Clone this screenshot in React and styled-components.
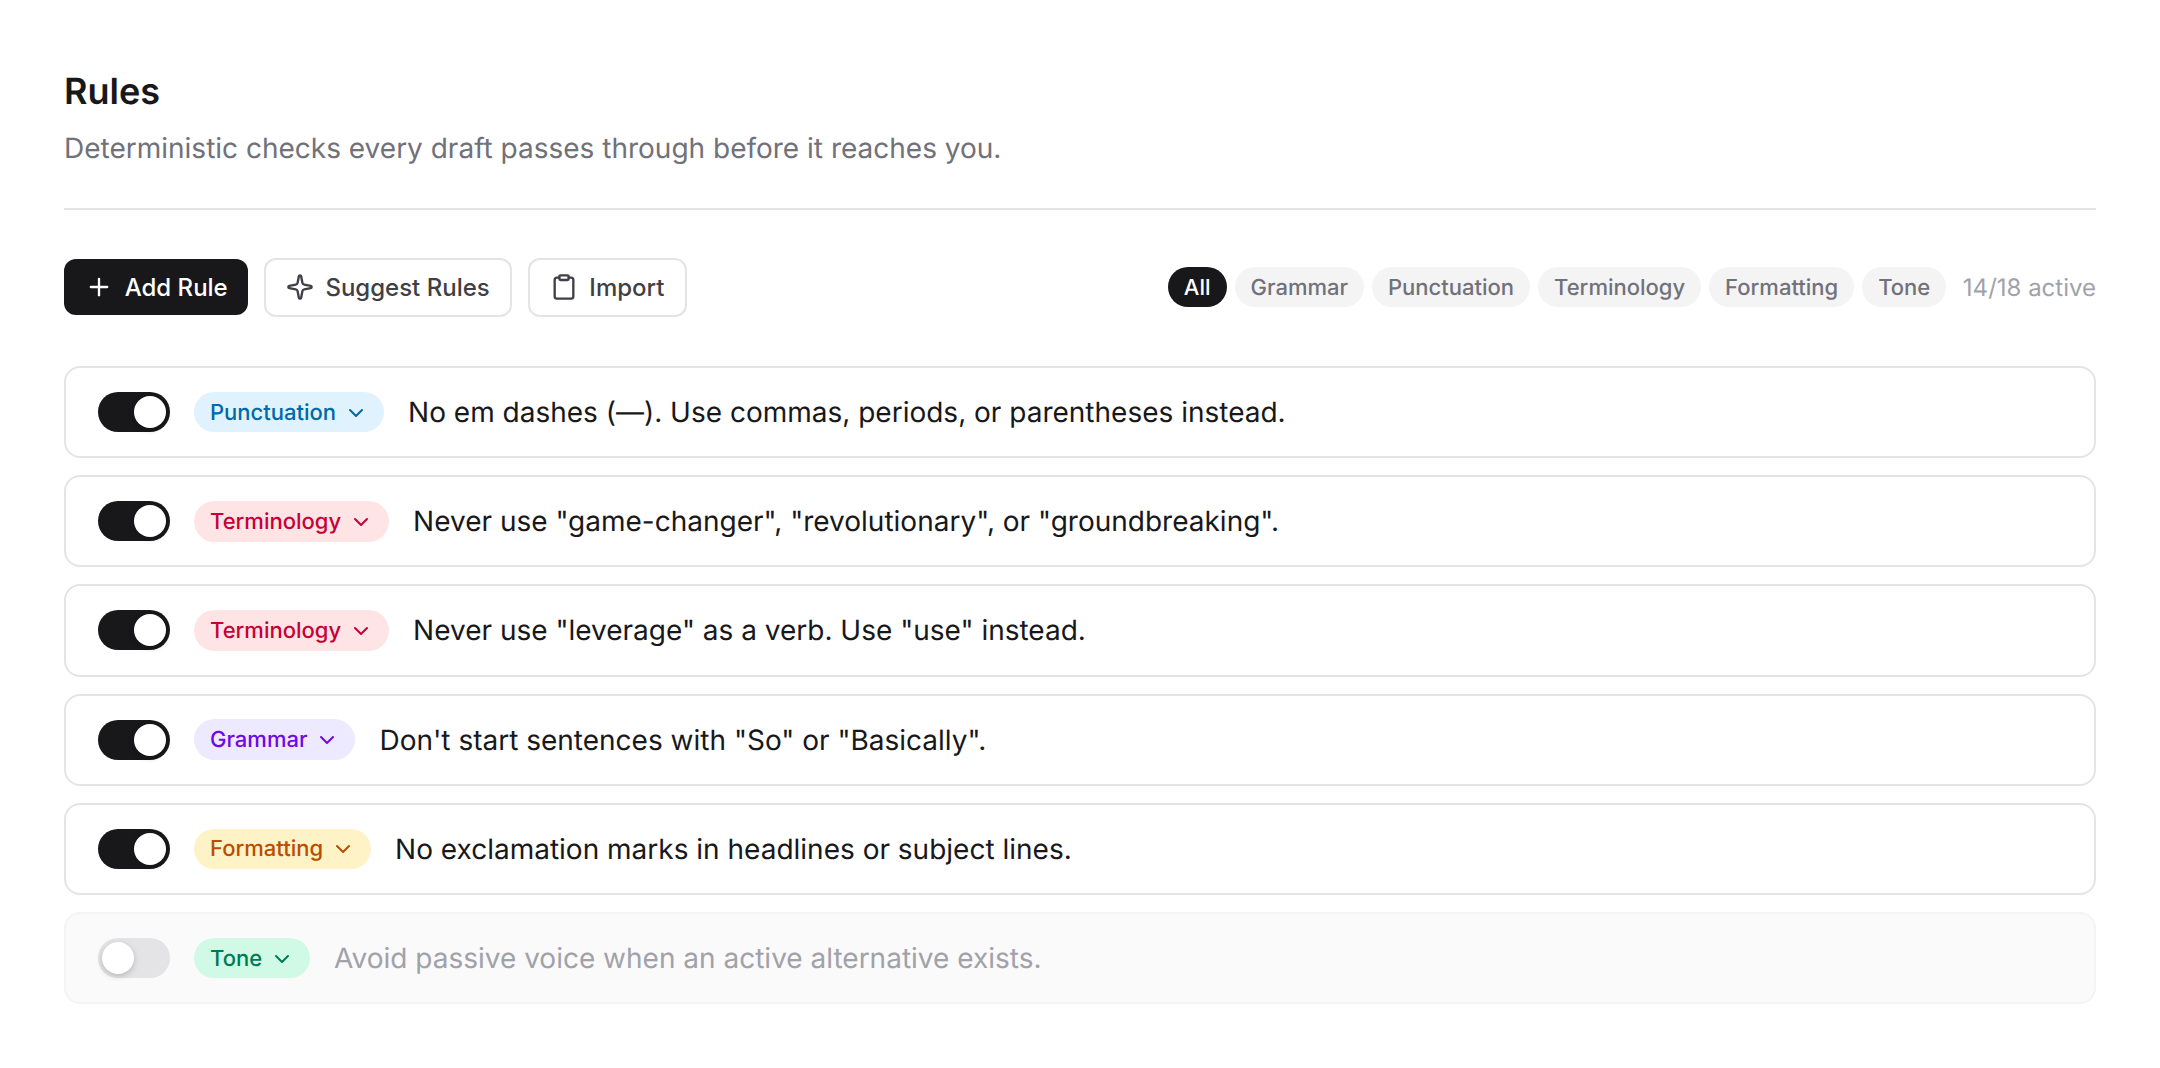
import React from 'react';
import styled, { createGlobalStyle } from 'styled-components';
import { ChevronDown, Clipboard, Plus, Sparkle } from 'lucide-react';

const GlobalStyle = createGlobalStyle`
  html, body {
    margin: 0;
    background: #fff;
  }

  body {
    font-family: Inter, "Liberation Sans", sans-serif;
    color: #18181b;
    text-rendering: geometricPrecision;
  }

  * {
    box-sizing: border-box;
  }
`;

const Page = styled.div`
  padding: 67px 64px 64px;
`;

const Header = styled.header`
  padding-bottom: 39.4px;
  border-bottom: 2px solid #e4e4e7;
`;

const Title = styled.h1`
  margin: 0;
  font-size: 36px;
  line-height: 48px;
  font-weight: 600;
  color: #18181b;
`;

const Subtitle = styled.p`
  margin: 12px 0 0;
  font-size: 28px;
  line-height: 42px;
  color: #71717a;
`;

const Toolbar = styled.div`
  display: flex;
  align-items: center;
  justify-content: space-between;
  margin-top: 47.6px;
`;

const Actions = styled.div`
  display: flex;
  align-items: center;
  gap: 16px;
`;

const PrimaryButton = styled.button`
  display: flex;
  align-items: center;
  gap: 12px;
  height: 56px;
  padding: 0 20.7px;
  border: 0;
  border-radius: 12px;
  background: #18181b;
  color: #fff;
  font: 500 24px Inter, sans-serif;
`;

const SecondaryButton = styled.button`
  display: flex;
  align-items: center;
  gap: 11px;
  height: 59px;
  padding: 0 20.6px 0 20px;
  border: 2px solid #e4e4e7;
  border-radius: 12px;
  background: #fff;
  color: #3f3f46;
  font: 500 24px Inter, sans-serif;
`;

const Filters = styled.div`
  display: flex;
  align-items: center;
  gap: 8px;
`;

const FilterPill = styled.span`
  display: flex;
  align-items: center;
  height: 40px;
  padding: 1px 16px 0;
  border-radius: 20px;
  background: ${p => (p.$active ? '#18181b' : '#f4f4f5')};
  color: ${p => (p.$active ? '#fff' : '#71717a')};
  font-size: 22px;
  font-weight: 500;
`;

const ActiveCount = styled.span`
  margin-left: 8.6px;
  font-size: 24px;
  color: #a1a1aa;
`;

const RuleList = styled.div`
  display: flex;
  flex-direction: column;
  gap: 17px;
  margin-top: 49px;
`;

const RuleCard = styled.div`
  display: flex;
  align-items: center;
  gap: 24px;
  height: 92.2px;
  padding: 0 32px;
  border: 2px solid ${p => (p.$off ? '#f4f4f5' : '#e4e4e7')};
  border-radius: 16px;
  background: ${p => (p.$off ? '#fafafa' : '#fff')};
`;

const Toggle = styled.span`
  display: flex;
  flex: none;
  justify-content: ${p => (p.$off ? 'flex-start' : 'flex-end')};
  align-items: center;
  width: 72px;
  height: 40px;
  padding: 4px;
  border-radius: 20px;
  background: ${p => (p.$off ? '#e4e4e7' : '#18181b')};
`;

const Knob = styled.span`
  width: 32px;
  height: 32px;
  border-radius: 50%;
  background: #fff;
  box-shadow: 0 2px 6px rgba(0, 0, 0, 0.2);
`;

const CategoryPill = styled.span`
  display: flex;
  flex: none;
  align-items: center;
  gap: 8px;
  height: 40.6px;
  padding: 1px 16px 0;
  border-radius: 21px;
  background: ${p => p.$bg};
  color: ${p => p.$fg};
  font-size: 22px;
  font-weight: 500;
`;

const RuleText = styled.span`
  font-size: 28px;
  color: ${p => (p.$off ? '#a1a1aa' : '#18181b')};
`;

const categories = {
  Punctuation: { bg: '#dff2fe', fg: '#0069a8' },
  Terminology: { bg: '#ffe4e6', fg: '#c70036' },
  Grammar: { bg: '#ede9fe', fg: '#7008e7' },
  Formatting: { bg: '#fef3c6', fg: '#bb4d00' },
  Tone: { bg: '#d0fae5', fg: '#007a55' },
};

const rules = [
  { category: 'Punctuation', text: 'No em dashes (—). Use commas, periods, or parentheses instead.' },
  { category: 'Terminology', text: 'Never use "game-changer", "revolutionary", or "groundbreaking".' },
  { category: 'Terminology', text: 'Never use "leverage" as a verb. Use "use" instead.' },
  { category: 'Grammar', text: 'Don\'t start sentences with "So" or "Basically".' },
  { category: 'Formatting', text: 'No exclamation marks in headlines or subject lines.' },
  { category: 'Tone', text: 'Avoid passive voice when an active alternative exists.', off: true },
];

const filters = ['All', 'Grammar', 'Punctuation', 'Terminology', 'Formatting', 'Tone'];

const App = () => (
  <Page>
    <GlobalStyle />
    <Header>
      <Title>Rules</Title>
      <Subtitle>Deterministic checks every draft passes through before it reaches you.</Subtitle>
    </Header>
    <Toolbar>
      <Actions>
        <PrimaryButton><Plus size={28} strokeWidth={2} />Add Rule</PrimaryButton>
        <SecondaryButton><Sparkle size={28} strokeWidth={2} />Suggest Rules</SecondaryButton>
        <SecondaryButton><Clipboard size={28} strokeWidth={2} />Import</SecondaryButton>
      </Actions>
      <Filters>
        {filters.map(name => (
          <FilterPill key={name} $active={name === 'All'}>{name}</FilterPill>
        ))}
        <ActiveCount>14/18 active</ActiveCount>
      </Filters>
    </Toolbar>
    <RuleList>
      {rules.map(({ category, text, off }) => (
        <RuleCard key={text} $off={off}>
          <Toggle $off={off}><Knob /></Toggle>
          <CategoryPill $bg={categories[category].bg} $fg={categories[category].fg}>
            {category}
            <ChevronDown size={24} strokeWidth={2} />
          </CategoryPill>
          <RuleText $off={off}>{text}</RuleText>
        </RuleCard>
      ))}
    </RuleList>
  </Page>
);

export default App;
